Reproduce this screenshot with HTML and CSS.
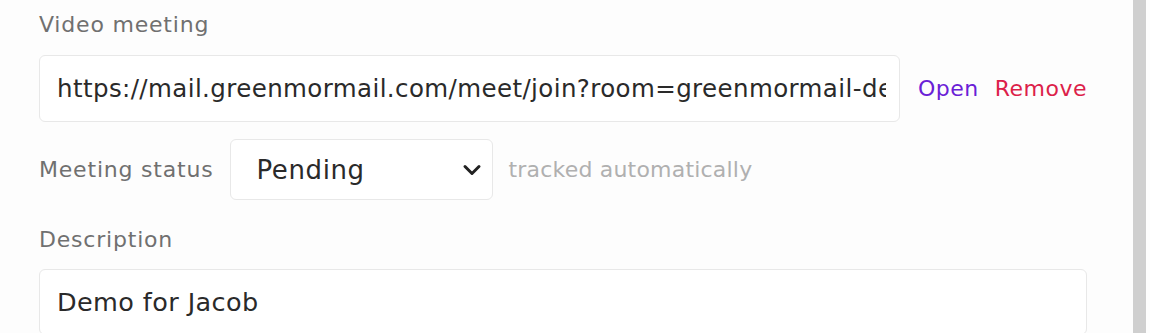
FILE: index.html
```html
<!DOCTYPE html>
<html>
<head>
<meta charset="utf-8">
<link rel="stylesheet" href="styles.css">
</head>
<body>
<div class="page">
  <div class="form">
    <div class="label top">Video meeting</div>
    <div class="row link-row">
      <input class="field url" type="text" readonly value="https://mail.greenmormail.com/meet/join?room=greenmormail-demo-jacob">
      <a class="act open">Open</a>
      <a class="act remove">Remove</a>
    </div>
    <div class="row status-row">
      <span class="label">Meeting status</span>
      <div class="field select">
        <span>Pending</span>
        <svg class="chev" width="20" height="12" viewBox="0 0 20 12"><path d="M3 2.5 L10 9.5 L17 2.5" fill="none" stroke="#222" stroke-width="3" stroke-linecap="round" stroke-linejoin="round"/></svg>
      </div>
      <span class="hint">tracked automatically</span>
    </div>
    <div class="label desc">Description</div>
    <div class="field textarea">Demo for Jacob</div>
  </div>
  <div class="scroll"></div>
</div>
</body>
</html>
```
FILE: styles.css
```css
html, body {
  margin: 0;
  padding: 0;
  background: #fdfdfd;
  overflow: hidden;
}
body {
  font-family: "DejaVu Sans", "Noto Sans", sans-serif;
  color: #2b2b2b;
}
.page {
  display: flex;
  width: 1150px;
  height: 333px;
}
.form {
  flex: 1;
  padding: 10px 0 0 39px;
  display: flex;
  flex-direction: column;
  align-items: flex-start;
}
.scroll {
  width: 13px;
  margin-right: 4px;
  background: #cfcfcf;
}
.label {
  font-size: 22px;
  letter-spacing: 0.8px;
  color: #707070;
  line-height: 30px;
}
.row {
  display: flex;
  align-items: center;
}
.link-row {
  margin-top: 15px;
}
.field {
  box-sizing: border-box;
  background: #fff;
  border: 1.5px solid #e8e8e8;
  border-radius: 6px;
  color: #2a2a2a;
  margin: 0;
}
.url {
  width: 861px;
  height: 67px;
  padding: 0 13px 0 17px;
  font-family: inherit;
  font-size: 24.5px;
  letter-spacing: 0.4px;
  outline: none;
}
.act {
  font-size: 22px;
  letter-spacing: 0.5px;
}
.open {
  color: #6a20d6;
  margin-left: 18px;
}
.remove {
  color: #dc1f4a;
  margin-left: 16px;
}
.status-row {
  margin-top: 17px;
}
.select {
  margin-left: 16px;
  width: 263px;
  height: 61px;
  padding: 0 10px 0 26px;
  display: flex;
  align-items: center;
  justify-content: space-between;
  font-size: 26px;
  letter-spacing: 0.6px;
}
.hint {
  margin-left: 16px;
  font-size: 22px;
  letter-spacing: 0.2px;
  color: #b0b0b0;
}
.desc {
  margin-top: 25px;
}
.textarea {
  margin-top: 14px;
  width: 1048px;
  height: 90px;
  padding: 14px 17px;
  font-size: 25.5px;
  letter-spacing: 0.4px;
  line-height: 36px;
}
```
